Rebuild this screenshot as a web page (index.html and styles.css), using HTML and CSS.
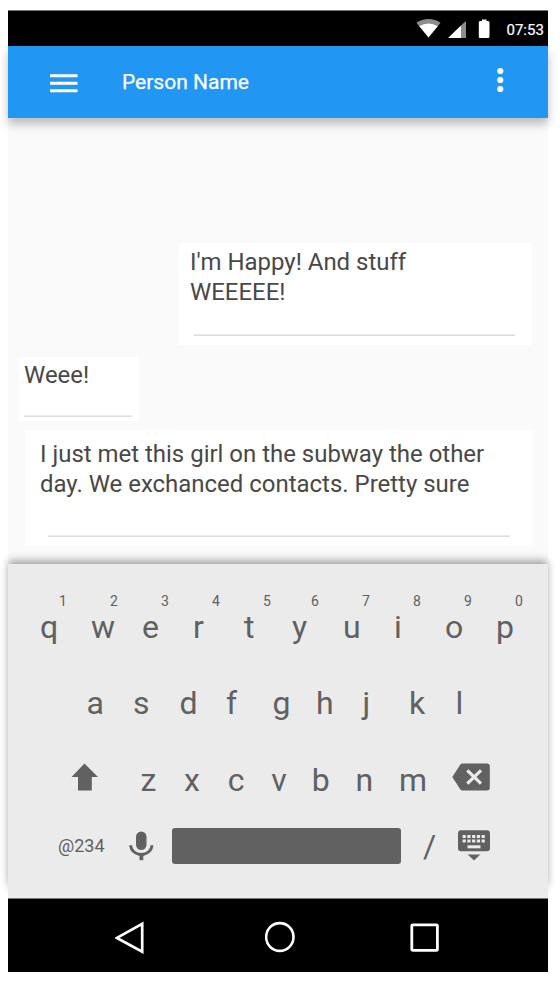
FILE: index.html
```
<!DOCTYPE html>
<html lang="en">
<head>
<meta charset="utf-8">
<title>Person Name</title>
<link rel="stylesheet" href="styles.css">
</head>
<body>
<main class="phone">
  <div class="status">
    <svg class="status-icons" width="80" height="24" viewBox="0 0 80 24">
      <path fill="#8e8e8e" d="M.5 5.800C7.500.8 17.500.8 24.500 5.800L21.800 9.300H3.200z"/>
      <path fill="#fff" d="M3.200 9.300Q12.500 3.500 21.800 9.300L12.500 20.500z"/>
      <path fill="#fff" d="M32 21L45 8.500V21z"/>
      <path fill="#8e8e8e" d="M45 8.500L50 4V21H45z"/>
      <path fill="#fff" d="M66 2.500h4.500v1.500h1.500q1.500 0 1.500 1.500v14q0 1.500-1.500 1.500h-8q-1.200 0-1.200-1.500v-14q0-1.500 1.200-1.500h2z"/>
    </svg>
    <span class="time">07:53</span>
  </div>
  <header class="appbar">
    <svg class="menu" width="28" height="20" viewBox="0 0 28 20"><path fill="#fff" d="M0 .2h27.500v3H0zM0 7.700h27.500v3H0zM0 15.200h27.500v3H0z"/></svg>
    <h1 class="title">Person Name</h1>
    <svg class="more" width="8" height="26" viewBox="0 0 8 26"><g fill="#fff"><circle cx="4.300" cy="4" r="3.100"/><circle cx="4.300" cy="13" r="3.100"/><circle cx="4.300" cy="22" r="3.100"/></g></svg>
  </header>
  <section class="chat">
    <article class="bubble sent"><p>I'm Happy! And stuff<br>WEEEEE!</p><hr></article>
    <article class="bubble short"><p>Weee!</p><hr></article>
    <article class="bubble long"><p>I just met this girl on the subway the other<br>day. We exchanced contacts. Pretty sure</p><hr></article>
  </section>
  <section class="keyboard">
    <div class="digits"><span>1</span><span>2</span><span>3</span><span>4</span><span class="mid">5</span><span>6</span><span>7</span><span>8</span><span>9</span><span>0</span></div>
    <div class="keys top"><span>q</span><span>w</span><span>e</span><span>r</span><span class="mid">t</span><span>y</span><span>u</span><span>i</span><span>o</span><span>p</span></div>
    <div class="keys home"><span>a</span><span>s</span><span>d</span><span>f</span><span class="mid">g</span><span>h</span><span>j</span><span>k</span><span>l</span></div>
    <div class="keys bottom">
      <svg class="shift" width="28" height="28" viewBox="0 0 28 28"><path fill="#616161" d="M13.500.5L27 14h-6.200v13.500H7V14H.500z"/></svg>
      <span>z</span><span>x</span><span>c</span><span class="mid">v</span><span>b</span><span>n</span><span>m</span>
      <svg class="delete" width="38" height="28" viewBox="0 0 38 28"><path fill="#616161" d="M10.500.5H35q2.800 0 2.800 2.800v21.400q0 2.800-2.800 2.800H10.500q-1.500 0-2.300-1.200L.3 14 8.200 1.700Q9 .5 10.500.5z"/><path stroke="#ebebeb" stroke-width="3.200" d="M15.300 7.300L29 20.700M29 7.300L15.300 20.700"/></svg>
    </div>
    <div class="function-row">
      <span class="symbols">@234</span>
      <svg class="mic" width="25" height="30" viewBox="0 0 25 30"><rect x="7" y=".5" width="10.500" height="18.500" rx="5.200" fill="#616161"/><path fill="none" stroke="#616161" stroke-width="2.800" d="M1.700 14.200a10.600 9.300 0 0 0 21.200 0"/><path fill="#616161" d="M10.500 23.500H14.300v5.700H10.500z"/></svg>
      <div class="space"></div>
      <span class="slash">/</span>
      <svg class="hide" width="32" height="31" viewBox="0 0 32 31"><rect y=".3" width="32" height="21" rx="3" fill="#616161"/><path stroke="#ebebeb" stroke-width="3" stroke-dasharray="3.200 1.550" d="M4.600 6.500H27.200M4.600 11H27.200"/><path fill="#ebebeb" d="M9.500 15.300h13V18.300h-13z"/><path fill="#616161" d="M9.700 24.500h12.600L16 30.500z"/></svg>
    </div>
  </section>
  <nav class="nav">
    <svg width="30" height="34" viewBox="0 0 30 34"><path fill="none" stroke="#fff" stroke-width="2.700" d="M27.200 2.800V30.700L1.900 16.900z"/></svg>
    <svg width="30" height="34" viewBox="0 0 30 34"><ellipse cx="14.800" cy="16" rx="13.700" ry="13.900" fill="none" stroke="#fff" stroke-width="2.600"/></svg>
    <svg class="recents" width="30" height="34" viewBox="0 0 30 34"><rect x="1.800" y="3.800" width="25.600" height="25.600" rx="1" fill="none" stroke="#fff" stroke-width="2.800"/></svg>
  </nav>
</main>
</body>
</html>
```
FILE: styles.css
```
* { box-sizing: border-box; }
body { margin: 0; background: #fff; font-family: Roboto, sans-serif; }
svg { display: block; flex: none; }
.phone { width: 540px; height: 962px; margin: 10px 0 0 8px; display: flex; flex-direction: column; }
.status { height: 36px; flex: none; background: #000; border-top: 1px solid #777; display: flex; align-items: center; color: #fff; }
.status-icons { margin-left: 408px; }
.time { margin-left: 10.500px; font-size: 15px; margin-top: 3px; white-space: nowrap; -webkit-text-stroke: .2px; }
.appbar { position: relative; z-index: 1; height: 72px; flex: none; background: #2196f3; display: flex; align-items: center; color: #fff; box-shadow: 0 6px 9px rgba(0,0,0,.25); }
.menu { margin: 3px 0 0 42px; }
.title { margin: 0 0 0 44px; font-size: 21px; font-weight: 400; line-height: 24px; -webkit-text-stroke: .25px; }
.more { margin: -4px 44px 0 auto; }
.chat { position: relative; z-index: -2; height: 446px; flex: none; background: #fafafa; padding-top: 125px; display: flex; flex-direction: column; align-items: flex-start; }
.bubble { background: #fff; color: #484848; font-size: 23.960px; line-height: 30px; }
.bubble p { margin: 0; white-space: nowrap; }
.bubble hr { margin: 0; border: 0; height: 2px; background: linear-gradient(#ececec 50%, #dcdcdc 50%); }
.sent { width: 354px; height: 102px; margin-left: 170px; padding: 4px 17px 0 12px; }
.sent hr { margin: 27px 0 0 4px; }
.short { width: 120px; height: 64px; margin: 12px 0 0 11px; padding: 3px 7px 0 5px; }
.short hr { margin-top: 25px; }
.long { width: 508px; height: 116px; margin: 9px 0 0 17px; padding: 9px 23px 0 15px; }
.long hr { margin: 36px 0 0 8px; }
.keyboard { position: relative; height: 334px; flex: none; background: #ebebeb; display: flex; flex-direction: column; color: #616161; }
.keyboard::before { content: ""; position: absolute; inset: 0 0 8px; z-index: -1; box-shadow: 0 -5px 8px -1px rgba(0,0,0,.3), 0 0 8px rgba(0,0,0,.1); }
.digits { display: flex; height: 16px; margin: 29px 0 0 51px; font-size: 14px; line-height: 16px; }
.digits span, .top span { width: 51px; flex: none; }
.digits .mid, .top .mid { width: 48px; }
.keys { display: flex; height: 38px; font-size: 32px; line-height: 38px; }
.top { margin: -1px 0 0 32px; }
.home { margin: 38px 0 0 78.500px; }
.home span { width: 46.500px; flex: none; }
.home .mid { width: 43.500px; }
.bottom { margin: 39px 0 0 63px; }
.bottom span { width: 43.600px; flex: none; }
.bottom .mid { width: 40.500px; }
.shift { margin: 2px 41.500px 0 0; }
.delete { margin: 2px 0 0 9.500px; }
.function-row { display: flex; height: 38px; margin-top: 28px; align-items: center; }
.symbols { width: 71px; margin: -2px 0 0 50px; font-size: 18px; white-space: nowrap; }
.mic { margin-top: 0; }
.space { width: 229px; height: 36px; margin: 0 0 0 18px; background: #616161; border-radius: 3px; }
.slash { width: 35px; margin-left: 22px; font-size: 32px; line-height: 38px; }
.hide { margin-top: -1px; }
.nav { height: 74px; flex: none; background: #000; border-top: 1px solid #777; display: flex; align-items: center; gap: 119.500px; padding: 4px 0 0 107px; }
.recents { margin-left: -4.500px; }
```
